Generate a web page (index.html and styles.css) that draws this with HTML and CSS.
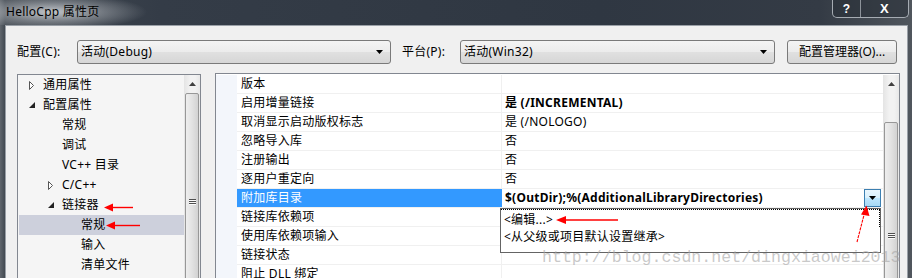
FILE: index.html
```html
<!DOCTYPE html>
<html lang="zh-CN">
<head>
<meta charset="utf-8">
<title>HelloCpp 属性页</title>
<link rel="stylesheet" href="styles.css">
</head>
<body>
<div class="window">
  <div class="titlebar">
    <span class="title">HelloCpp 属性页</span>
    <div class="caption-btns">
      <span class="cbtn help">?</span>
      <span class="cbtn close">X</span>
    </div>
  </div>
  <div class="frame">
    <div class="client">
      <div class="config-row">
        <span class="lbl lbl-config">配置(C):</span>
        <div class="combo combo-config"><span class="combo-text">活动(Debug)</span><svg class="caret" width="7" height="4" viewBox="0 0 7 4"><path d="M0 0H7L3.5 4Z" fill="#000"/></svg></div>
        <span class="lbl lbl-platform">平台(P):</span>
        <div class="combo combo-platform"><span class="combo-text">活动(Win32)</span><svg class="caret" width="7" height="4" viewBox="0 0 7 4"><path d="M0 0H7L3.5 4Z" fill="#000"/></svg></div>
        <div class="btn">配置管理器(O)...</div>
      </div>
      <div class="panels">
        <div class="tree">
          <div class="tree-rows">
            <div class="node lvl0"><span class="exp"><svg width="6" height="9" viewBox="0 0 6 9"><path d="M0.5 0.5L4.5 4.5L0.5 8.5Z" fill="#fff" stroke="#555"/></svg></span><span>通用属性</span></div>
            <div class="node lvl0"><span class="exp"><svg width="6" height="6" viewBox="0 0 6 6"><path d="M6 0V6H0Z" fill="#222"/></svg></span><span>配置属性</span></div>
            <div class="node lvl1"><span class="exp"></span><span>常规</span></div>
            <div class="node lvl1"><span class="exp"></span><span>调试</span></div>
            <div class="node lvl1"><span class="exp"></span><span>VC++ 目录</span></div>
            <div class="node lvl1"><span class="exp"><svg width="6" height="9" viewBox="0 0 6 9"><path d="M0.5 0.5L4.5 4.5L0.5 8.5Z" fill="#fff" stroke="#555"/></svg></span><span>C/C++</span></div>
            <div class="node lvl1"><span class="exp"><svg width="6" height="6" viewBox="0 0 6 6"><path d="M6 0V6H0Z" fill="#222"/></svg></span><span>链接器</span></div>
            <div class="node lvl2 selected"><span class="exp"></span><span>常规</span></div>
            <div class="node lvl2"><span class="exp"></span><span>输入</span></div>
            <div class="node lvl2"><span class="exp"></span><span>清单文件</span></div>
          </div>
          <div class="vscroll tree-scroll">
            <div class="sb-arrow"><svg width="7" height="4" viewBox="0 0 7 4"><path d="M3.5 0L7 4H0Z" fill="#404040"/></svg></div>
            <div class="thumb">
              <div class="grip"><i></i><i></i><i></i></div>
            </div>
          </div>
        </div>
        <div class="grid">
          <div class="gutter"></div>
          <div class="grid-rows">
            <div class="row"><div class="name">版本</div><div class="value"></div></div>
            <div class="row"><div class="name">启用增量链接</div><div class="value bold">是 (/INCREMENTAL)</div></div>
            <div class="row"><div class="name">取消显示启动版权标志</div><div class="value">是 (/NOLOGO)</div></div>
            <div class="row"><div class="name">忽略导入库</div><div class="value">否</div></div>
            <div class="row"><div class="name">注册输出</div><div class="value">否</div></div>
            <div class="row"><div class="name">逐用户重定向</div><div class="value">否</div></div>
            <div class="row selected"><div class="name">附加库目录</div><div class="value bold"><span>$(OutDir);%(AdditionalLibraryDirectories)</span><span class="dd-btn"><svg width="7" height="4" viewBox="0 0 7 4"><path d="M0 0H7L3.5 4Z" fill="#000"/></svg></span></div></div>
            <div class="row"><div class="name">链接库依赖项</div><div class="value"></div></div>
            <div class="row"><div class="name">使用库依赖项输入</div><div class="value"></div></div>
            <div class="row"><div class="name">链接状态</div><div class="value"></div></div>
            <div class="row"><div class="name">阻止 DLL 绑定</div><div class="value"></div></div>
          </div>
          <div class="vscroll grid-scroll">
            <div class="sb-arrow"><svg width="7" height="4" viewBox="0 0 7 4"><path d="M3.5 0L7 4H0Z" fill="#404040"/></svg></div>
            <div class="thumb">
              <div class="grip"><i></i><i></i><i></i></div>
            </div>
          </div>
          <div class="popup">
            <div class="pop-item focused">&lt;编辑...&gt;</div>
            <div class="pop-item">&lt;从父级或项目默认设置继承&gt;</div>
          </div>
        </div>
      </div>
    </div>
  </div>
  <div class="watermark">http://blog.csdn.net/dingxiaowei2013</div>
  <svg class="annotations" width="912" height="278" viewBox="0 0 912 278">
    <g fill="#f00" stroke="#f00">
      <line x1="111" y1="207.5" x2="133" y2="207.5" stroke-width="1.4"/>
      <path d="M104 207.5L113 203.5V211.5Z" stroke="none"/>
      <line x1="113" y1="225.5" x2="140" y2="225.5" stroke-width="1.4"/>
      <path d="M106 225.5L115 221.5V229.5Z" stroke="none"/>
      <line x1="564" y1="220" x2="618" y2="220" stroke-width="1.4"/>
      <path d="M556 220L566 216V224Z" stroke="none"/>
      <line x1="857" y1="242" x2="864.5" y2="213" stroke-width="1.1" stroke-dasharray="3 1"/>
      <path d="M866.5 205.5L869.5 216L861 214.5Z" stroke="none"/>
    </g>
  </svg>
</div>
</body>
</html>
```
FILE: styles.css
```css
* { box-sizing: border-box; }
html, body { margin: 0; padding: 0; }
body {
  width: 912px;
  height: 278px;
  overflow: hidden;
  font-family: "Noto Sans", "Noto Sans CJK SC", sans-serif;
  font-size: 12px;
  letter-spacing: 0.25px;
  color: #000;
}
.window {
  position: relative;
  width: 912px;
  height: 278px;
  overflow: hidden;
  display: flex;
  flex-direction: column;
  background: linear-gradient(90deg, #60666d 0px, #424951 5px, #343c47 160px, #2f3742 600px, #343b45 820px, #50565d 912px);
}
.titlebar {
  height: 25px;
  flex: none;
  display: flex;
  align-items: flex-start;
  background: radial-gradient(ellipse 95px 18px at 52px 12px, rgba(215,218,222,0.85), rgba(215,218,222,0.35) 55%, rgba(215,218,222,0) 100%);
}
.title {
  margin: 4px 0 0 6px;
  line-height: 16px;
  font-size: 12px;
  color: #000;
}
.caption-btns {
  margin-left: auto;
  margin-right: 3px;
  display: flex;
  height: 18px;
  border: 1px solid #a6acb3;
  border-top: none;
  border-radius: 0 0 5px 5px;
  background: rgba(40,46,55,0.6);
  overflow: hidden;
}
.cbtn {
  display: flex;
  align-items: center;
  justify-content: center;
  color: #fff;
  font-family: "Liberation Sans", sans-serif;
  font-weight: bold;
  font-size: 12px;
  line-height: 16px;
}
.cbtn.help { width: 28px; border-right: 1px solid #8d939a; }
.cbtn.close { width: 47px; font-size: 13px; }
.frame {
  flex: 1;
  display: flex;
  padding: 0 4px 0 5px;
}
.client {
  flex: 1;
  background: #f0f0f0;
  border: 1px solid #9aa0a7;
  border-bottom: none;
  padding: 14px 0 0 11px;
}
.config-row {
  display: flex;
  align-items: center;
  height: 24px;
}
.lbl { line-height: 16px; }
.lbl-config { width: 60px; }
.lbl-platform { width: 58px; margin-left: 11px; }
.combo {
  height: 24px;
  display: flex;
  align-items: center;
  border: 1px solid #7a7a7a;
  border-radius: 3px;
  background: linear-gradient(#f4f4f4, #ececec 48%, #e0e0e0 52%, #d6d6d6);
  padding: 0 7px 0 3px;
}
.combo-text { flex: 1; line-height: 16px; }
.caret { display: block; }
.combo-config { width: 314px; }
.combo-platform { width: 315px; }
.btn {
  margin-left: 12px;
  width: 110px;
  height: 24px;
  display: flex;
  align-items: center;
  justify-content: center;
  border: 1px solid #7a7a7a;
  border-radius: 3px;
  background: linear-gradient(#f4f4f4, #ececec 48%, #e0e0e0 52%, #d6d6d6);
  line-height: 16px;
  letter-spacing: 0;
}
.panels {
  display: flex;
  align-items: flex-start;
  margin-top: 9px;
}
.tree {
  width: 184px;
  height: 240px;
  margin-top: 1px;
  border: 1px solid #828790;
  background: #f5f5f5;
  display: flex;
}
.tree-rows {
  flex: 1;
  padding-left: 1px;
}
.node {
  height: 20px;
  display: flex;
  align-items: center;
  line-height: 16px;
  white-space: nowrap;
}
.node.lvl0 { padding-left: 10px; }
.node.lvl1 { padding-left: 29px; }
.node.lvl2 { padding-left: 48px; }
.node.selected { background: #cdd0dc; }
.exp {
  width: 14px;
  flex: none;
  display: flex;
  align-items: center;
}
.exp svg { display: block; }
.vscroll {
  width: 16px;
  flex: none;
  display: flex;
  flex-direction: column;
  background: linear-gradient(90deg, #e4e4e4, #f2f2f2 40%, #f2f2f2 70%, #e8e8e8);
}
.sb-arrow {
  height: 17px;
  display: flex;
  align-items: center;
  justify-content: center;
  flex: none;
}
.sb-arrow svg { display: block; }
.thumb {
  margin: 0 1px;
  border: 1px solid #979797;
  border-radius: 2px;
  background: linear-gradient(90deg, #eeeeee, #e2e2e2 50%, #d2d2d2);
  flex: 1;
  display: flex;
  flex-direction: column;
  align-items: center;
}
.tree-scroll .thumb { margin-top: 1px; }
.tree-scroll .grip { margin-top: 105px; }
.grid-scroll .thumb { margin-top: 30px; }
.grid-scroll .grip { margin-top: 110px; }
.grip { display: flex; flex-direction: column; gap: 1px; }
.grip i { display: block; width: 7px; height: 1px; background: #4f4f4f; box-shadow: 0 1px 0 #fafafa; }
.grid {
  position: relative;
  width: 685px;
  height: 240px;
  margin-left: 14px;
  border: 1px solid #828790;
  background: #fff;
  display: flex;
  padding-top: 1px;
}
.gutter {
  width: 21px;
  flex: none;
  background: #f3f6fb;
}
.grid-rows {
  width: 646px;
  flex: none;
}
.row {
  height: 19px;
  display: flex;
  border-bottom: 1px solid #f0f0f0;
}
.name {
  width: 265px;
  flex: none;
  border-right: 1px solid #f0f0f0;
  padding-left: 4px;
  line-height: 18px;
  white-space: nowrap;
}
.value {
  flex: 1;
  padding-left: 3px;
  line-height: 18px;
  white-space: nowrap;
  display: flex;
  align-items: center;
}
.value.bold { font-weight: bold; }
.row.selected .name {
  background: #3399ff;
  color: #fff;
  border-right-color: #3399ff;
}
.dd-btn {
  margin-left: auto;
  margin-right: 2px;
  width: 17px;
  height: 18px;
  border: 1px solid #3c7fb1;
  background: linear-gradient(#eaf6fd, #d9f0fc 50%, #bee6fd 51%, #a7d9f5);
  display: flex;
  align-items: center;
  justify-content: center;
}
.dd-btn svg { display: block; }
.popup {
  position: absolute;
  left: 284px;
  top: 134px;
  width: 381px;
  height: 45px;
  border: 1px solid #646464;
  background: #fff;
}
.pop-item {
  height: 18px;
  line-height: 19px;
  padding-left: 3px;
  white-space: nowrap;
}
.pop-item.focused {
  border-top: 1px dotted #000;
  border-right: 1px dotted #000;
  line-height: 20px;
}
.watermark {
  position: absolute;
  left: 542px;
  top: 247px;
  font-family: "Liberation Mono", monospace;
  font-size: 16.6px;
  line-height: 22px;
  letter-spacing: 0;
  color: rgba(165,165,165,0.6);
  white-space: nowrap;
  pointer-events: none;
}
.annotations {
  position: absolute;
  left: 0;
  top: 0;
  pointer-events: none;
}
```
